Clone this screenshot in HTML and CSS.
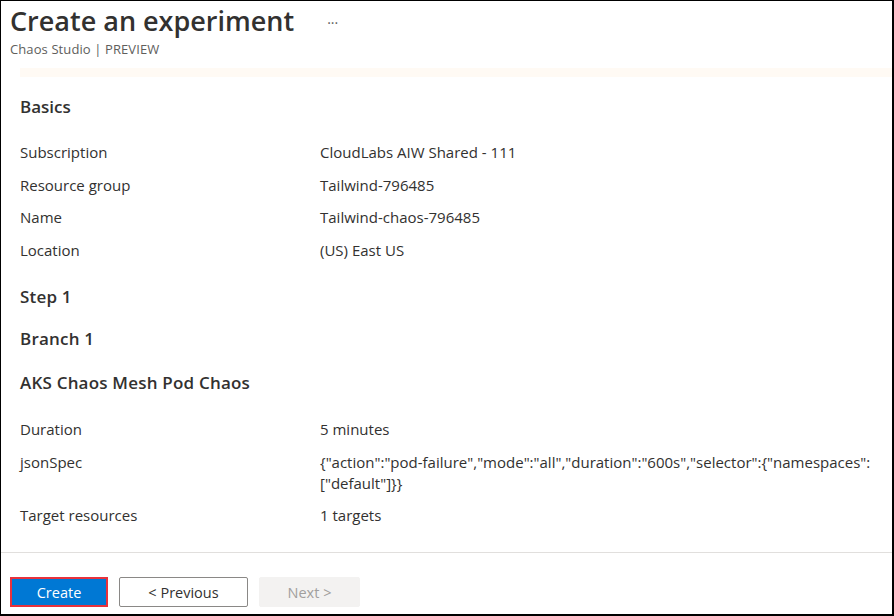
FILE: index.html
```html
<!DOCTYPE html>
<html>
<head>
<meta charset="utf-8">
<link rel="stylesheet" href="styles.css">
</head>
<body>
<div class="frame">
  <header class="head">
    <div class="title-row">
      <h1 class="title">Create an experiment</h1>
      <span class="more">···</span>
    </div>
    <div class="subtitle">Chaos Studio | PREVIEW</div>
  </header>
  <div class="strip"></div>
  <main class="content">
    <h2 class="sec sec-basics">Basics</h2>
    <div class="rows">
      <div class="row"><span class="lbl">Subscription</span><span class="val">CloudLabs AIW Shared - 111</span></div>
      <div class="row"><span class="lbl">Resource group</span><span class="val">Tailwind-796485</span></div>
      <div class="row"><span class="lbl">Name</span><span class="val">Tailwind-chaos-796485</span></div>
      <div class="row"><span class="lbl">Location</span><span class="val">(US) East US</span></div>
    </div>
    <h2 class="sec sec-step">Step 1</h2>
    <h2 class="sec">Branch 1</h2>
    <h2 class="sec sec-aks">AKS Chaos Mesh Pod Chaos</h2>
    <div class="rows rows2">
      <div class="row"><span class="lbl">Duration</span><span class="val">5 minutes</span></div>
      <div class="row"><span class="lbl">jsonSpec</span><span class="val">{"action":"pod-failure","mode":"all","duration":"600s","selector":{"namespaces":["default"]}}</span></div>
      <div class="row"><span class="lbl">Target resources</span><span class="val">1 targets</span></div>
    </div>
  </main>
  <footer class="foot">
    <button class="btn btn-primary">Create</button>
    <button class="btn btn-secondary">&lt; Previous</button>
    <button class="btn btn-disabled">Next &gt;</button>
  </footer>
</div>
</body>
</html>
```
FILE: styles.css
```css
* { box-sizing: border-box; }
html, body { margin: 0; padding: 0; background: #fff; }
body { font-family: "Open Sans", "Noto Sans", sans-serif; color: #323130; }
.frame {
  width: 894px;
  height: 616px;
  border-style: solid;
  border-color: #000;
  border-width: 1px 2px 2px 1px;
  display: flex;
  flex-direction: column;
  overflow: hidden;
}
.head { padding: 4px 0 0 9px; height: 67px; }
.title-row { display: flex; align-items: center; }
.title { margin: 0; font-size: 27px; font-weight: 600; color: #323130; line-height: 32px; letter-spacing: 0; }
.more { margin-left: 33px; font-size: 14px; color: #605e5c; margin-top: 2px; }
.subtitle { font-size: 13px; color: #605e5c; line-height: 16px; margin-top: 4px; letter-spacing: 0.1px; }
.strip { margin-left: 19px; height: 9px; background: #fffaf4; }
.content { flex: 1; padding: 19px 0 0 19px; }
.sec { margin: 0; font-size: 17px; font-weight: 600; line-height: 22px; color: #323130; letter-spacing: 0.2px; }
.sec-basics { margin-bottom: 24px; letter-spacing: 0; }
.rows { display: flex; flex-direction: column; }
.row { display: grid; grid-template-columns: 300px 1fr; font-size: 15px; line-height: 21px; margin-bottom: 11.5px; letter-spacing: 0; }
.sec-step { margin-top: 14px; }
.sec + .sec { margin-top: 20px; }
.sec + .sec-aks { margin-top: 22px; }
.rows2 { margin-top: 25px; }
.lbl, .val { color: #323130; }
.val { padding-right: 20px; }
.foot {
  border-top: 1px solid #e1dfdd;
  height: 62px;
  padding: 24px 0 0 9px;
  display: flex;
  gap: 11px;
  align-items: flex-start;
}
.btn {
  font-family: inherit;
  font-size: 14.5px;
  height: 30px;
  border-radius: 2px;
  padding: 0;
  letter-spacing: 0;
}
.btn-primary { width: 98px; background: #0078d4; color: #fff; border: 2px solid #e8323c; border-radius: 0; }
.btn-secondary { width: 129px; background: #fff; color: #323130; border: 1px solid #8a8886; }
.btn-disabled { width: 101px; background: #f3f2f1; color: #a19f9d; border: 1px solid #f3f2f1; }
```
